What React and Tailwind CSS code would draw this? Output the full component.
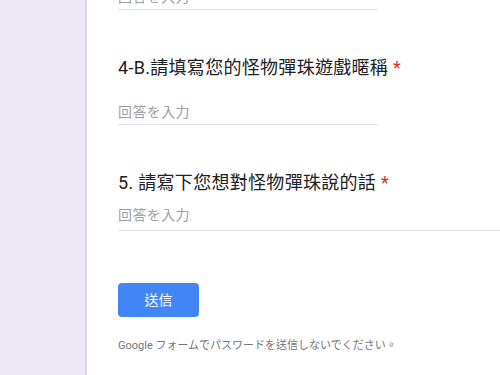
export default function App() {
  const font = { fontFamily: "Roboto, 'Noto Sans CJK TC', 'Noto Sans CJK JP', sans-serif" };
  return (
    <div className="flex w-[500px] h-[375px] overflow-hidden bg-[#ede7f6]" style={font}>
      <div className="w-[85px] shrink-0 bg-[#ede7f6]" />
      <div className="w-[2px] shrink-0 bg-[#d9d3e3]" />
      <div className="flex-1 bg-white pl-[31px] overflow-hidden">
        <div className="w-[260px] h-[25px] -mt-[15px] border-b border-[#e0e0e0] text-[14px] leading-[24px] tracking-[0.4px] text-[#9aa0a6]">
          回答を入力
        </div>
        <div className="mt-[46px] h-[24px] text-[18px] leading-[24px] tracking-[0.3px] text-[#202124] whitespace-nowrap">
          4-B.請填寫您的怪物彈珠遊戲暱稱 <span className="text-[#d93025]">*</span>
        </div>
        <div className="mt-[20px] w-[260px] h-[25px] border-b border-[#e0e0e0] text-[14px] leading-[24px] tracking-[0.4px] text-[#9aa0a6]">
          回答を入力
        </div>
        <div className="mt-[46px] h-[24px] text-[18px] leading-[24px] tracking-[0.3px] text-[#202124] whitespace-nowrap">
          5. 請寫下您想對怪物彈珠說的話 <span className="text-[#d93025]">*</span>
        </div>
        <div className="mt-[8px] w-[600px] h-[28px] pb-[3px] border-b border-[#e0e0e0] text-[14px] leading-[24px] tracking-[0.4px] text-[#9aa0a6]">
          回答を入力
        </div>
        <button className="mt-[52px] w-[81px] h-[34px] rounded-[4px] bg-[#4285f4] text-white text-[14px] leading-[34px] text-center">
          送信
        </button>
        <div className="mt-[21px] h-[16px] text-[11px] leading-[16px] text-[#70757a] whitespace-nowrap">
          Google フォームでパスワードを送信しないでください。
        </div>
      </div>
    </div>
  );
}
